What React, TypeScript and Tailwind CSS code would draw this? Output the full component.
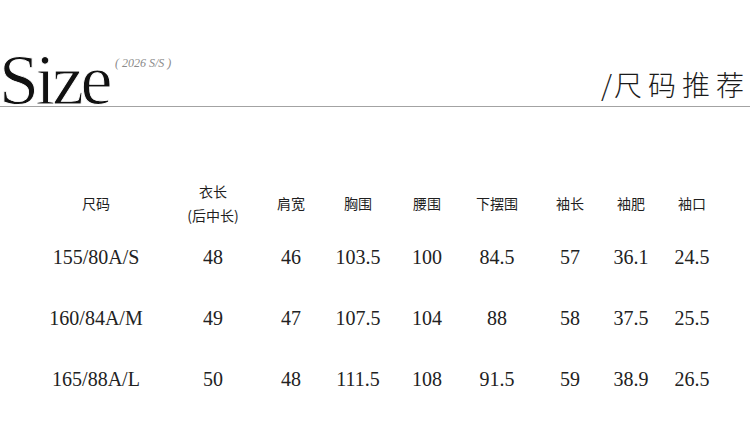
const columns = ['120px', '114px', '42px', '92px', '46px', '94px', '52px', '70px', '52px'];

const headers: string[][] = [
  ['尺码'],
  ['衣长', '(后中长)'],
  ['肩宽'],
  ['胸围'],
  ['腰围'],
  ['下摆围'],
  ['袖长'],
  ['袖肥'],
  ['袖口'],
];

const rows: string[][] = [
  ['155/80A/S', '48', '46', '103.5', '100', '84.5', '57', '36.1', '24.5'],
  ['160/84A/M', '49', '47', '107.5', '104', '88', '58', '37.5', '25.5'],
  ['165/88A/L', '50', '48', '111.5', '108', '91.5', '59', '38.9', '26.5'],
];

const serif = "font-['Liberation_Serif','Times_New_Roman',serif]";
const cjk = "font-['Noto_Sans_CJK_SC','Noto_Sans',sans-serif]";

export default function App() {
  return (
    <div className="w-[750px] h-[423px] bg-white overflow-hidden">
      {/* Title bar */}
      <div className="flex items-start h-[107px] border-b border-[#a3a3a3]">
        <span
          className={`${serif} block ml-[-1px] mt-[44px] text-[72px] leading-none tracking-[-3.5px] text-[#111] [-webkit-text-stroke:0.9px_white] [paint-order:normal]`}
        >
          Size
        </span>
        <span className={`${serif} block ml-[6px] mt-[57px] text-[12px] leading-none italic text-[#8a8a8a]`}>
          ( 2026 S/S )
        </span>
        <span className={`${cjk} ml-auto mt-[70px] text-[28px] leading-none font-light text-[#1a1a1a] whitespace-nowrap`}>
          <span className="mr-[2px]">/</span>
          <span className="tracking-[6px]">尺码推荐</span>
        </span>
      </div>

      {/* Size table */}
      <div className="pl-[36px] mt-[72px]">
        <div
          className={`${cjk} grid h-[48px] items-center text-[14px] text-[#1f1f1f]`}
          style={{ gridTemplateColumns: columns.join(' ') }}
        >
          {headers.map((lines, i) => (
            <div key={i} className="text-center whitespace-nowrap leading-[24px]">
              {lines.map(line => (
                <div key={line}>{line}</div>
              ))}
            </div>
          ))}
        </div>

        {rows.map(row => (
          <div
            key={row[0]}
            className={`${serif} grid h-[61px] items-center text-[20px] text-[#222]`}
            style={{ gridTemplateColumns: columns.join(' ') }}
          >
            {row.map((cell, i) => (
              <div key={i} className="text-center whitespace-nowrap leading-[61px]">
                {cell}
              </div>
            ))}
          </div>
        ))}
      </div>
    </div>
  );
}
